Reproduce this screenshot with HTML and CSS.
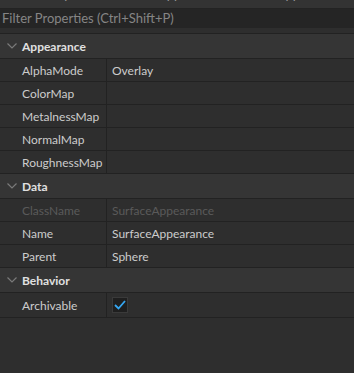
FILE: index.html
```html
<!DOCTYPE html>
<html lang="en">
<head>
    <meta charset="UTF-8">
    <title>Properties</title>
    <link rel="stylesheet" href="styles.css">
</head>
<body>
    <!-- 상단 타이틀 (잘린부분) -->
    <div class="titlebar">
        <span class="ttxt">Properties - SurfaceAppearance "SurfaceAppearance"</span>
    </div>

    <!-- 필터 -->
    <div class="filter">Filter Properties (Ctrl+Shift+P)</div>
    <div class="gap"></div>

    <!-- 속성목록 -->
    <div class="plist">
        <div class="sect">
            <svg class="chev" width="10" height="6" viewBox="0 0 10 6"><path d="M0.5 0.5 L5 5 L9.5 0.5" fill="none" stroke="#7a7a7a" stroke-width="1.2"/></svg>
            <span>Appearance</span>
        </div>
        <div class="row"><div class="pname">AlphaMode</div><div class="pval">Overlay</div></div>
        <div class="row"><div class="pname">ColorMap</div><div class="pval"></div></div>
        <div class="row"><div class="pname">MetalnessMap</div><div class="pval"></div></div>
        <div class="row"><div class="pname">NormalMap</div><div class="pval"></div></div>
        <div class="row"><div class="pname">RoughnessMap</div><div class="pval"></div></div>

        <div class="sect">
            <svg class="chev" width="10" height="6" viewBox="0 0 10 6"><path d="M0.5 0.5 L5 5 L9.5 0.5" fill="none" stroke="#7a7a7a" stroke-width="1.2"/></svg>
            <span>Data</span>
        </div>
        <div class="row dis"><div class="pname">ClassName</div><div class="pval">SurfaceAppearance</div></div>
        <div class="row"><div class="pname">Name</div><div class="pval">SurfaceAppearance</div></div>
        <div class="row"><div class="pname">Parent</div><div class="pval">Sphere</div></div>

        <div class="sect">
            <svg class="chev" width="10" height="6" viewBox="0 0 10 6"><path d="M0.5 0.5 L5 5 L9.5 0.5" fill="none" stroke="#7a7a7a" stroke-width="1.2"/></svg>
            <span>Behavior</span>
        </div>
        <div class="row tall">
            <div class="pname">Archivable</div>
            <div class="pval">
                <span class="chk">
                    <svg width="12" height="10" viewBox="0 0 12 10"><path d="M1 5 L4.5 8.5 L11 1" fill="none" stroke="#35a7f2" stroke-width="1.8"/></svg>
                </span>
            </div>
        </div>
    </div>
</body>
</html>
```

FILE: styles.css
```css
html,
body {
    margin: 0;
    padding: 0;
    width: 100%;
    height: 100%;
}

body {
    background: #2e2e2e;
    font-family: "Lato", "Noto Sans", sans-serif;
    font-size: 12px;
    color: #cccccc;
    overflow: hidden;
}

/* 타이틀 - 위쪽이 잘려서 아래부분만 보임 */
.titlebar {
    height: 8px;
    overflow: hidden;
    background: #333;
    border-bottom: 1px solid #232323;
    text-align: center;
    color: #999;
    font-size: 13px;
}

.ttxt {
    display: block;
    margin-top: -14px;
    line-height: 16px;
    padding-left: 40px;
    white-space: nowrap;
}

/* 필터 */
.filter {
    height: 19px;
    line-height: 19px;
    padding-left: 2px;
    background: #252525;
    color: #858585;
    font-size: 13px;
}

.gap {
    height: 5px;
    border-bottom: 1px solid #222;
    background: #2e2e2e;
}

/* 섹션 헤더 */
.sect {
    display: flex;
    align-items: center;
    height: 24px;
    background: #353535;
    border-bottom: 1px solid #222;
    font-weight: bold;
    color: #e0e0e0;
}

.chev {
    margin-left: 7px;
    margin-right: 5px;
}

/* 속성 행 */
.row {
    display: flex;
    height: 22px;
    border-bottom: 1px solid #222;
}

.row.tall {
    height: 24px;
}

.pname {
    width: 84px;
    padding-left: 22px;
    display: flex;
    align-items: center;
    border-right: 1px solid #222;
}

.pval {
    flex: 1;
    padding-left: 5px;
    display: flex;
    align-items: center;
}

.dis .pname,
.dis .pval {
    color: #5a5a5a;
}

/* 체크박스 */
.chk {
    display: flex;
    align-items: center;
    justify-content: center;
    width: 14px;
    height: 14px;
    background: #1f1f1f;
    border: 1px solid #3a3a3a;
}
```
